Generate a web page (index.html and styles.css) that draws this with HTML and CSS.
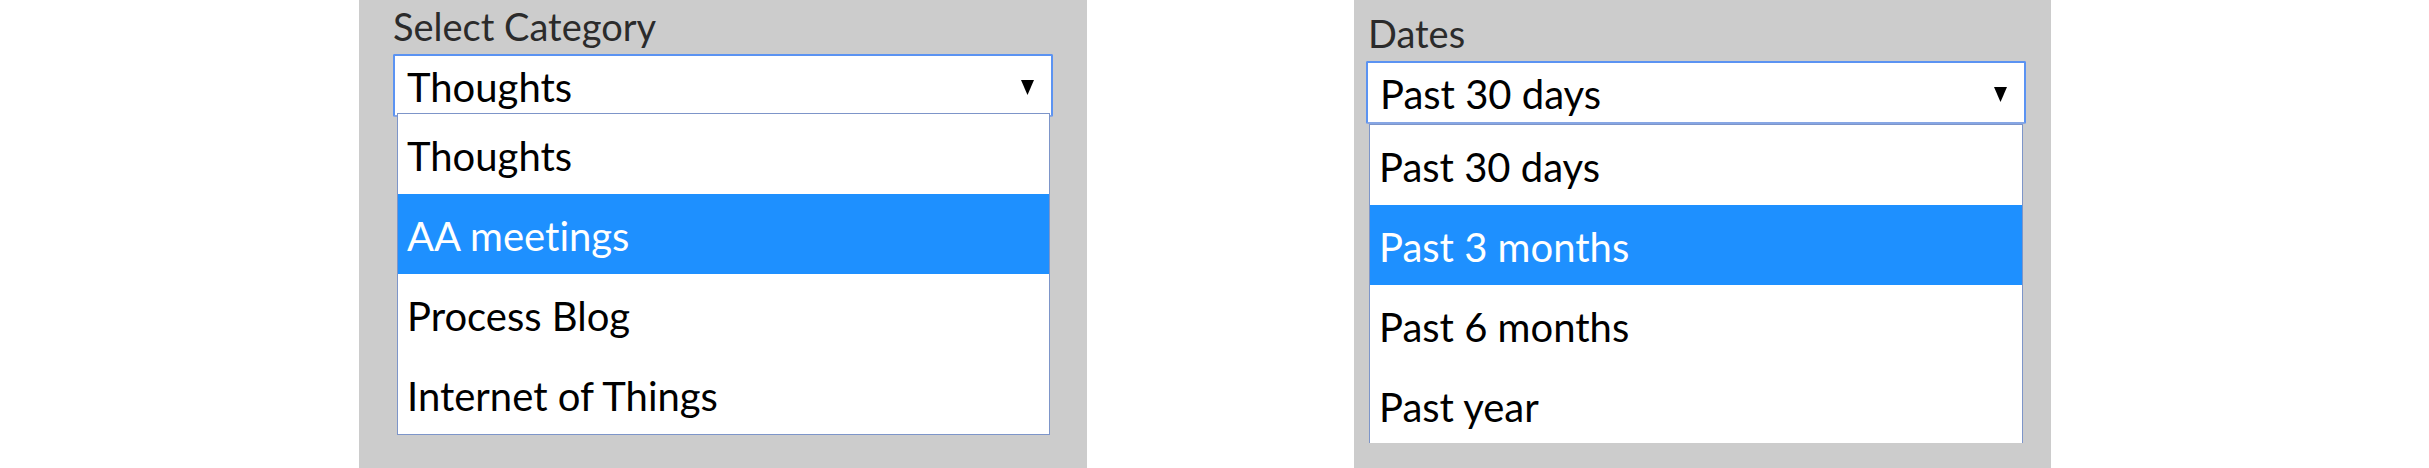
FILE: index.html
```html
<!DOCTYPE html>
<html lang="en">
<head>
<meta charset="utf-8">
<title>Dropdowns</title>
<link rel="stylesheet" href="styles.css">
</head>
<body>
<div class="page">
  <section class="panel panel-category">
    <div class="label">Select Category</div>
    <div class="field">
      <div class="select">
        <span class="value">Thoughts</span>
        <svg class="arrow" viewBox="0 0 13 15" width="13" height="15"><polygon points="0,0 13,0 6.5,15" fill="#000"/></svg>
      </div>
      <ul class="menu">
        <li class="option">Thoughts</li>
        <li class="option active">AA meetings</li>
        <li class="option">Process Blog</li>
        <li class="option">Internet of Things</li>
      </ul>
    </div>
  </section>
  <section class="panel panel-dates">
    <div class="label">Dates</div>
    <div class="field">
      <div class="select">
        <span class="value">Past 30 days</span>
        <svg class="arrow" viewBox="0 0 13 15" width="13" height="15"><polygon points="0,0 13,0 6.5,15" fill="#000"/></svg>
      </div>
      <ul class="menu menu-clipped">
        <li class="option">Past 30 days</li>
        <li class="option active">Past 3 months</li>
        <li class="option">Past 6 months</li>
        <li class="option">Past year</li>
      </ul>
    </div>
  </section>
</div>
</body>
</html>
```
FILE: styles.css
```css
html, body {
  margin: 0;
  padding: 0;
  background: #ffffff;
}

body {
  font-family: Lato, "Open Sans", "Liberation Sans", sans-serif;
  font-variant-ligatures: none;
  height: 468px;
  overflow: hidden;
}

.page {
  display: flex;
  gap: 267px;
  padding-left: 359px;
  height: 468px;
}

.panel {
  background: #cccccc;
  height: 468px;
  box-sizing: border-box;
}

.panel-category {
  width: 728px;
  padding: 4px 34px 0 34px;
}

.panel-dates {
  width: 697px;
  padding: 11px 25px 0 12px;
}

.label {
  font-size: 38px;
  line-height: 44px;
  color: #2b2b2b;
  margin-bottom: 6px;
}

.panel-dates .label {
  padding-left: 2px;
}

.field {
  position: relative;
  width: 660px;
}

.select {
  display: flex;
  align-items: center;
  justify-content: space-between;
  height: 63px;
  box-sizing: border-box;
  border: 2px solid #5b93f2;
  border-bottom-color: #86a6e4;
  border-radius: 2px;
  background: #ffffff;
  padding: 3px 17px 0 12px;
  font-size: 40px;
  line-height: 48px;
  color: #000;
}

.menu {
  position: absolute;
  top: 59px;
  left: 4px;
  right: 3px;
  margin: 0;
  padding: 0;
  list-style: none;
  background: #ffffff;
  border: 1px solid #7d95c9;
  z-index: 2;
}

.panel-dates .menu {
  top: 63px;
  left: 3px;
  right: 3px;
}

.menu-clipped {
  border-bottom: none;
  height: 319px;
  overflow: hidden;
  box-sizing: border-box;
}

.option {
  height: 80px;
  box-sizing: border-box;
  padding: 5px 0 0 9px;
  line-height: 75px;
  font-size: 40px;
  color: #000;
  white-space: nowrap;
}

.option.active {
  background: #1e90ff;
  color: #ffffff;
}
```
